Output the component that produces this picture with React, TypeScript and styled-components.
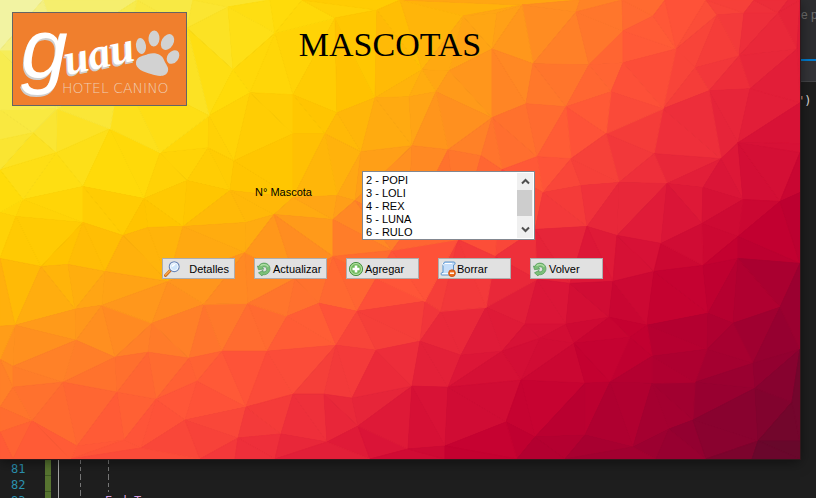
import React, { useRef } from 'react';
import styled, { createGlobalStyle } from 'styled-components';

const GlobalStyle = createGlobalStyle`
  *, *::before, *::after { box-sizing: border-box; }
  html, body { margin: 0; padding: 0; background: #1e1e1e; }
  body { font-family: "Liberation Sans", Arial, sans-serif; font-size: 11px; color: #000; }
`;

/* ---------- low-poly backdrop ---------- */

type Point = [number, number];
type Triangle = [number, number, number];

const MESH_WIDTH = 800;
const MESH_HEIGHT = 460;

const vertices: Point[] = [
  [0, 0], [43, 0], [137, 0], [187, 28], [193, 0], [228, 7], [270, 0], [275, 33], [233, 70], [293, 95], [250, 93],
  [209, 116], [337, 113], [335, 18], [377, 10], [302, 0], [110, 129], [160, 153], [208, 148], [234, 161], [293, 134],
  [325, 134], [375, 98], [361, 152], [57, 109], [33, 133], [56, 153], [0, 140], [0, 110], [83, 187], [23, 200],
  [0, 213], [16, 217], [83, 223], [123, 236], [144, 199], [187, 181], [230, 191], [183, 227], [148, 228], [246, 223],
  [274, 215], [293, 198], [337, 196], [333, 220], [355, 201], [0, 170], [0, 50], [60, 50], [120, 70], [400, 0],
  [463, 16], [522, 5], [497, 13], [576, 12], [580, 0], [492, 49], [449, 71], [422, 70], [409, 97], [436, 92],
  [533, 64], [526, 104], [492, 118], [589, 65], [623, 31], [622, 0], [653, 16], [665, 0], [676, 49], [717, 15],
  [706, 0], [744, 13], [754, 0], [778, 13], [788, 0], [800, 0], [797, 49], [739, 56], [695, 68], [709, 91],
  [750, 89], [738, 143], [800, 103], [800, 144], [721, 159], [663, 109], [654, 154], [623, 63], [611, 92],
  [566, 107], [606, 134], [571, 159], [537, 157], [448, 150], [412, 146], [481, 156], [543, 193], [581, 186],
  [619, 183], [667, 184], [703, 188], [743, 200], [780, 202], [800, 153], [502, 170], [587, 227], [535, 230],
  [617, 236], [702, 224], [738, 237], [800, 193], [0, 259], [41, 267], [68, 265], [105, 272], [15, 326], [75, 310],
  [102, 306], [76, 341], [115, 358], [13, 367], [0, 360], [13, 388], [63, 383], [32, 422], [0, 408], [0, 433],
  [168, 282], [152, 324], [148, 353], [189, 359], [204, 305], [248, 304], [222, 352], [245, 253], [197, 382],
  [156, 400], [117, 393], [124, 441], [77, 447], [71, 460], [185, 421], [141, 449], [246, 408], [238, 439],
  [267, 352], [287, 317], [319, 304], [295, 279], [333, 257], [357, 312], [376, 279], [336, 346], [376, 351],
  [293, 395], [324, 395], [352, 399], [358, 427], [281, 435], [327, 443], [370, 460], [200, 460], [235, 460],
  [275, 460], [13, 460], [0, 327], [0, 460], [425, 302], [441, 312], [486, 308], [525, 325], [570, 284], [537, 280],
  [420, 342], [461, 356], [502, 352], [540, 339], [566, 325], [609, 318], [613, 282], [647, 326], [654, 272],
  [661, 244], [703, 266], [708, 314], [738, 259], [800, 264], [780, 308], [733, 324], [707, 350], [753, 364],
  [755, 389], [693, 421], [695, 383], [652, 357], [630, 338], [574, 344], [521, 381], [585, 384], [610, 383],
  [652, 384], [448, 388], [412, 387], [506, 423], [535, 438], [585, 436], [633, 448], [669, 430], [758, 442],
  [800, 442], [792, 403], [800, 350], [445, 447], [408, 450], [445, 460], [517, 460], [565, 460], [656, 460],
  [706, 460], [752, 460], [800, 460], [495, 257], [458, 240], [408, 229], [392, 251],
];

const palette: [number, number, number][] = [
  [240, 245, 192], [247, 236, 80], [255, 220, 10], [255, 196, 0], [255, 165, 20], [255, 128, 40],
  [255, 85, 56], [240, 50, 58], [220, 22, 55], [195, 0, 48], [150, 0, 48], [90, 10, 42],
];

/* palette position for each 100 x 92 cell corner */
const warmth = [
  [0, 0.8, 1.3, 2.1, 3, 3.9, 5, 6.1, 7.6],
  [0.9, 1.3, 1.9, 2.6, 3.6, 4.8, 5.8, 6.9, 8],
  [1.8, 2.1, 2.6, 3.3, 4.6, 5.7, 6.8, 7.8, 8.8],
  [3.1, 3.7, 4.3, 5.1, 6, 7.2, 8.3, 9, 9.7],
  [4.8, 5.2, 5.7, 6.3, 7.3, 8.3, 9, 9.6, 10.3],
  [6, 6.1, 6.7, 7.6, 8.5, 9.2, 9.7, 10.2, 11],
];

const mix = (a: number, b: number, f: number) => a + (b - a) * f;

function colourAt(x: number, y: number, shift: number): string {
  const gx = Math.min(x / 100, 7.999);
  const gy = Math.min(y / 92, 4.999);
  const cx = Math.floor(gx);
  const cy = Math.floor(gy);
  const top = mix(warmth[cy][cx], warmth[cy][cx + 1], gx - cx);
  const bottom = mix(warmth[cy + 1][cx], warmth[cy + 1][cx + 1], gx - cx);
  const t = Math.max(0, Math.min(10.999, mix(top, bottom, gy - cy) + shift));
  const i = Math.floor(t);
  const [r, g, b] = [0, 1, 2].map((c) => Math.round(mix(palette[i][c], palette[i + 1][c], t - i)));
  return `rgb(${r}, ${g}, ${b})`;
}

function inCircumcircle(p: Point, a: Point, b: Point, c: Point): boolean {
  const d = 2 * (a[0] * (b[1] - c[1]) + b[0] * (c[1] - a[1]) + c[0] * (a[1] - b[1]));
  if (Math.abs(d) < 1e-9) return false;
  const sa = a[0] ** 2 + a[1] ** 2;
  const sb = b[0] ** 2 + b[1] ** 2;
  const sc = c[0] ** 2 + c[1] ** 2;
  const ux = (sa * (b[1] - c[1]) + sb * (c[1] - a[1]) + sc * (a[1] - b[1])) / d;
  const uy = (sa * (c[0] - b[0]) + sb * (a[0] - c[0]) + sc * (b[0] - a[0])) / d;
  return (p[0] - ux) ** 2 + (p[1] - uy) ** 2 < (a[0] - ux) ** 2 + (a[1] - uy) ** 2 - 1e-7;
}

function triangulate(points: Point[]): Triangle[] {
  const n = points.length;
  const all: Point[] = [...points, [-20000, -20000], [20000, -19000], [300, 30000]];
  let triangles: Triangle[] = [[n, n + 1, n + 2]];
  for (let i = 0; i < n; i++) {
    const edges = new Map<string, [number, number]>();
    const kept: Triangle[] = [];
    for (const tri of triangles) {
      if (!inCircumcircle(all[i], all[tri[0]], all[tri[1]], all[tri[2]])) {
        kept.push(tri);
        continue;
      }
      for (let k = 0; k < 3; k++) {
        const a = tri[k];
        const b = tri[(k + 1) % 3];
        const key = a < b ? `${a}-${b}` : `${b}-${a}`;
        if (edges.has(key)) edges.delete(key);
        else edges.set(key, [a, b]);
      }
    }
    edges.forEach(([a, b]) => kept.push([a, b, i]));
    triangles = kept;
  }
  return triangles.filter((tri) => tri.every((v) => v < n));
}

const facets = triangulate(vertices).map(([a, b, c], i) => {
  const corners = [vertices[a], vertices[b], vertices[c]];
  const x = (corners[0][0] + corners[1][0] + corners[2][0]) / 3;
  const y = (corners[0][1] + corners[1][1] + corners[2][1]) / 3;
  const shift = (((a * 31 + b * 17 + c * 7) % 11) / 10 - 0.5) * 0.12;
  return { id: i, points: corners.map((p) => p.join(',')).join(' '), fill: colourAt(x, y, shift) };
});

const Backdrop = styled.svg`
  position: absolute;
  inset: 0;
  width: 100%;
  height: 100%;
`;

const LowPoly = () => (
  <Backdrop viewBox={`0 0 ${MESH_WIDTH} ${MESH_HEIGHT}`} preserveAspectRatio="none" aria-hidden="true">
    {facets.map((f) => (
      <polygon key={f.id} points={f.points} fill={f.fill} stroke={f.fill} strokeWidth="1" />
    ))}
  </Backdrop>
);

/* ---------- page ---------- */

const Desktop = styled.div`
  display: grid;
  grid-template-columns: minmax(0, 1fr) 16px;
  grid-template-rows: minmax(0, 1fr) 39px;
  height: 100vh;
  overflow: hidden;
  background: #1e1e1e;
`;

const Form = styled.form`
  position: relative;
  z-index: 1;
  box-shadow: 0 0 0 1px #30181c, 0 3px 12px rgba(0, 0, 0, 0.5);
`;

const Content = styled.div`
  position: relative;
  display: flex;
  flex-direction: column;
  gap: 65px;
`;

const Header = styled.header`
  display: grid;
  grid-template-columns: 175px 1fr 175px;
  padding: 12px 32px 0 12px;
`;

const Title = styled.h1`
  margin: 13px 0 0;
  font-family: "Liberation Serif", "Times New Roman", serif;
  font-size: 34px;
  font-weight: 400;
  line-height: 40px;
  text-align: center;
`;

const LogoFrame = styled.div`
  height: 94px;
  border: 1px solid #646464;
  background: #f07f2d;
  svg { display: block; width: 100%; height: 100%; overflow: visible; }
`;

const Panel = styled.main`
  display: flex;
  flex-direction: column;
  gap: 18px;
  width: max-content;
  margin: 0 auto;
  padding-right: 35px;
`;

const Field = styled.div`
  display: grid;
  grid-template-columns: 107px 173px;
  padding-left: 93px;
`;

const Label = styled.label`
  padding-top: 14px;
  line-height: 14px;
`;

const ListFrame = styled.div`
  display: flex;
  height: 69px;
  padding: 1px;
  border: 1px solid #828790;
  background: #fff;
`;

const List = styled.select`
  flex: 1;
  min-width: 0;
  height: 66px;
  padding: 1px 0 0;
  border: 0;
  border-radius: 0;
  outline: 0;
  overflow: hidden;
  background: #fff;
  color: #000;
  font: 11px/13px "Liberation Sans", Arial, sans-serif;
  option {
    min-height: 13px;
    height: 13px;
    padding: 0 2px;
    line-height: 13px;
  }
`;

const ScrollBar = styled.div`
  display: flex;
  flex-direction: column;
  width: 16px;
  background: #f0f0f0;
`;

const ScrollButton = styled.button`
  display: grid;
  place-items: center;
  flex: none;
  height: 17px;
  padding: 0;
  border: 0;
  background: #f0f0f0;
`;

const Thumb = styled.div`
  height: 26px;
  margin: 0 1px 5px 0;
  background: #cdcdcd;
`;

const Actions = styled.div`
  display: flex;
  gap: 19px;
`;

const ActionButton = styled.button<{ $spread?: boolean }>`
  display: flex;
  align-items: center;
  justify-content: ${(p) => (p.$spread ? 'space-between' : 'flex-start')};
  gap: 1px;
  width: 73px;
  height: 21px;
  padding: 0 ${(p) => (p.$spread ? 5 : 1)}px 0 1px;
  border: 1px solid #adadad;
  border-radius: 0;
  background: #e1e1e1;
  color: #000;
  font: 11px/16px "Liberation Sans", Arial, sans-serif;
  svg { flex: none; }
`;

/* ---------- editor behind the form ---------- */

const SideStrip = styled.aside`
  display: flex;
  flex-direction: column;
  min-width: 0;
  overflow: hidden;
  white-space: nowrap;
`;

const TitleStrip = styled.div`
  height: 61px;
  padding: 8px 0 0 1px;
  border-bottom: 2px solid #007acc;
  background: #2d2d30;
  color: #6d6d6d;
  font-size: 12px;
  line-height: 15px;
`;

const ToolStrip = styled.div`
  height: 21px;
  border-bottom: 1px solid #434346;
  background: #333337;
`;

const CodeEnd = styled.div`
  padding-top: 11px;
  color: #dcdcdc;
  font: 12px/16px "DejaVu Sans Mono", monospace;
`;

const Quote = styled.span`
  margin-left: -3px;
  color: #d69d85;
`;

const Editor = styled.footer`
  grid-column: 1 / -1;
  overflow: hidden;
  padding-top: 1px;
  font: 12px/18px "DejaVu Sans Mono", monospace;
`;

const CodeLine = styled.div`
  display: flex;
  height: 16px;
`;

const LineNumber = styled.span`
  width: 45px;
  padding-left: 11px;
  color: #2b91af;
`;

const ChangeMark = styled.span`
  width: 6px;
  margin-right: 7px;
  border-bottom: 1px solid #3f5a22;
  background: #577430;
`;

const Outline = styled.span`
  width: 22px;
  border-left: 1px solid #a5a5a5;
`;

const Guide = styled.span<{ $last?: boolean }>`
  width: ${(p) => (p.$last ? 25 : 28)}px;
  background: repeating-linear-gradient(#777 0 4px, transparent 4px 7px) 0 0 / 1px 100% no-repeat;
`;

const Keyword = styled.span`
  color: #d8a0df;
`;

/* ---------- drawings ---------- */

const Wordmark = ({ fill }: { fill: string }) => (
  <g fill={fill} fontStyle="italic">
    <text x="8" y="65" fontFamily="Liberation Sans, Arial, sans-serif" fontSize="84">g</text>
    <text x="54" y="62" fontFamily="Liberation Serif, serif" fontWeight="700" fontSize="44" transform="rotate(-12 54 62)">uau</text>
  </g>
);

const Logo = () => (
  <LogoFrame>
    <svg viewBox="0 0 173 92" role="img" aria-label="Guau Hotel Canino">
      <g transform="translate(-1 2)">
        <Wordmark fill="#cfcfcf" />
      </g>
      <Wordmark fill="#fff" />
      <g fill="#d2d2d2">
        <ellipse cx="128" cy="33" rx="5" ry="8" transform="rotate(-8 128 33)" />
        <ellipse cx="141" cy="25.500" rx="5.500" ry="8" transform="rotate(4 141 25.500)" />
        <ellipse cx="154.500" cy="29" rx="6" ry="8.500" transform="rotate(30 154.500 29)" />
        <ellipse cx="160" cy="44" rx="5.500" ry="7.500" transform="rotate(38 160 44)" />
        <path d="M123 49 C124 43 131 43 135 41 C142 39 149 41 151 47 C153 52 156 54 155 58 C153 65 144 63 138 61 C131 59 122 56 123 49Z" />
      </g>
      <text x="49" y="80" fontFamily="DejaVu Sans" fontWeight="200" fontSize="14" fill="#efcdb2">HOTEL CANINO</text>
    </svg>
  </LogoFrame>
);

const Chevron = ({ up }: { up?: boolean }) => (
  <svg width="9" height="7" viewBox="0 0 9 7" aria-hidden="true">
    <path d={up ? 'M1 5.500 L4.500 2 L8 5.500' : 'M1 1.500 L4.500 5 L8 1.500'} fill="none" stroke="#505050" strokeWidth="2" />
  </svg>
);

const SearchIcon = () => (
  <svg width="16" height="16" viewBox="0 0 16 16" aria-hidden="true">
    <path d="M1.500 14.500 L6 9.800" stroke="#c96a1b" strokeWidth="3" strokeLinecap="round" />
    <path d="M1.500 14 L5.500 9.900" stroke="#f9a94a" strokeWidth="1.500" strokeLinecap="round" />
    <circle cx="10.200" cy="5.700" r="4.900" fill="#cfe6fb" stroke="#6a86b8" strokeWidth="1.200" />
    <circle cx="10.200" cy="5.700" r="3.900" fill="none" stroke="#fff" strokeWidth="0.800" />
    <path d="M7.500 6 C7.800 3.800 9.500 2.800 11.500 3.200 C10.500 4.800 9 5.500 7.500 6Z" fill="#fff" />
  </svg>
);

const RefreshIcon = () => (
  <svg width="16" height="16" viewBox="0 0 16 16" aria-hidden="true">
    <path
      d="M2.500 5.500 C4 2.500 7 1.600 9.800 2.300 C13 3.200 14.600 6.500 13.700 9.600 C12.700 12.700 9.600 14.200 6.600 13.700 L6 15 L2.500 11.800 L7 9.400 L6.800 10.800 C8.700 11.200 10.400 10.300 10.700 8.700 C11 7.300 10 6 8.600 5.800 C7.600 5.700 6.900 6.100 6.400 6.800 L7.800 8 L2.500 8.600 L1.500 5Z"
      fill="#7cc078" stroke="#4b9450" strokeWidth="0.700" strokeLinejoin="round"
    />
    <path d="M4.500 4.800 C6.500 3 10.500 3 12.300 5.600" fill="none" stroke="#b4e0a8" strokeWidth="1.200" />
  </svg>
);

const AddIcon = () => (
  <svg width="16" height="16" viewBox="0 0 16 16" aria-hidden="true">
    <circle cx="8" cy="8" r="6.600" fill="#6fbb5c" stroke="#4a9347" strokeWidth="1" />
    <circle cx="8" cy="8" r="5.500" fill="none" stroke="#c3e7b4" strokeWidth="0.900" />
    <path d="M8 4.500 V11.500 M4.500 8 H11.500" stroke="#fff" strokeWidth="2.600" />
  </svg>
);

const ScriptDeleteIcon = () => (
  <svg width="16" height="16" viewBox="0 0 16 16" aria-hidden="true">
    <path d="M4.500 1 H14 C15.500 1 15.500 4 13.500 4 V14 H2 C0.500 14 0.500 11.500 3 11.500 V3 Z" fill="#c5defa" stroke="#5b93cc" strokeWidth="1" />
    <path d="M3 1.500 C2 2.500 2.500 4 4 4 M5 2.500 H12" fill="none" stroke="#fff" strokeWidth="1" />
    <path d="M2 12.700 H10" stroke="#fff" strokeWidth="1" />
    <circle cx="12" cy="12.200" r="3.400" fill="#ee6d1c" stroke="#c04d0e" strokeWidth="0.800" />
    <path d="M10 12.200 H14" stroke="#fff" strokeWidth="1.500" />
  </svg>
);

const pets = ['2 - POPI', '3 - LOLI', '4 - REX', '5 - LUNA', '6 - RULO'];

const actions = [
  { label: 'Detalles', icon: <SearchIcon />, spread: true },
  { label: 'Actualizar', icon: <RefreshIcon /> },
  { label: 'Agregar', icon: <AddIcon /> },
  { label: 'Borrar', icon: <ScriptDeleteIcon /> },
  { label: 'Volver', icon: <RefreshIcon /> },
];

export default function App() {
  const list = useRef<HTMLSelectElement>(null);
  const scroll = (dy: number) => list.current?.scrollBy(0, dy);

  return (
    <Desktop>
      <GlobalStyle />
      <Form onSubmit={(e) => e.preventDefault()}>
        <LowPoly />
        <Content>
          <Header>
            <Logo />
            <Title>MASCOTAS</Title>
          </Header>
          <Panel>
            <Field>
              <Label htmlFor="mascota">N° Mascota</Label>
              <ListFrame>
                <List id="mascota" size={5} ref={list}>
                  {pets.map((pet) => (
                    <option key={pet}>{pet}</option>
                  ))}
                </List>
                <ScrollBar>
                  <ScrollButton type="button" aria-label="Subir" onClick={() => scroll(-13)}>
                    <Chevron up />
                  </ScrollButton>
                  <Thumb />
                  <ScrollButton type="button" aria-label="Bajar" onClick={() => scroll(13)}>
                    <Chevron />
                  </ScrollButton>
                </ScrollBar>
              </ListFrame>
            </Field>
            <Actions>
              {actions.map((a) => (
                <ActionButton key={a.label} type="button" $spread={a.spread}>
                  {a.icon}
                  {a.label}
                </ActionButton>
              ))}
            </Actions>
          </Panel>
        </Content>
      </Form>
      <SideStrip>
        <TitleStrip>e p</TitleStrip>
        <ToolStrip />
        <CodeEnd>
          <Quote>"</Quote>)
        </CodeEnd>
      </SideStrip>
      <Editor>
        <CodeLine>
          <LineNumber>81</LineNumber>
          <ChangeMark />
          <Outline />
          <Guide />
          <Guide $last />
        </CodeLine>
        <CodeLine>
          <LineNumber>82</LineNumber>
          <ChangeMark />
          <Outline />
          <Guide />
          <Guide $last />
        </CodeLine>
        <CodeLine>
          <LineNumber>83</LineNumber>
          <ChangeMark />
          <Outline />
          <Guide $last />
          <Keyword>End T</Keyword>
        </CodeLine>
      </Editor>
    </Desktop>
  );
}
